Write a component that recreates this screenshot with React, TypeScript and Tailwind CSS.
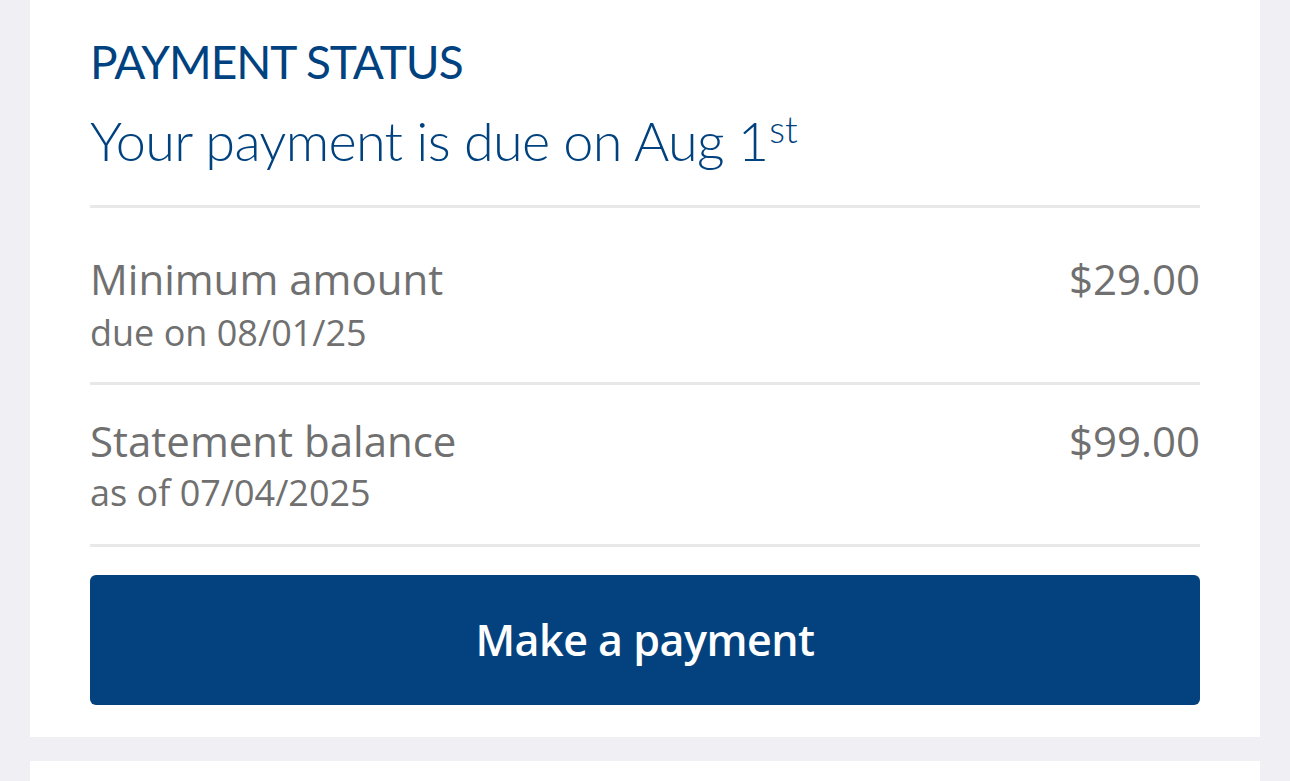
export default function App() {
  return (
    <div className="min-h-screen w-full bg-[#efeff4] px-[30px]" style={{ fontFamily: "'Open Sans', sans-serif" }}>
      <section className="bg-white px-[60px] pt-[39px] pb-[32px]">
        <h2 className="text-[46px] leading-none tracking-[-1px] text-[#00427f] font-['Lato',sans-serif]">PAYMENT STATUS</h2>
        <p className="mt-[29px] text-[54px] leading-none tracking-[-0.7px] font-light text-[#00427f] font-['Lato',sans-serif]">
          Your payment is due on Aug 1<sup className="ml-[1px] text-[37px] leading-[0] tracking-normal">st</sup>
        </p>
        <div className="mt-[37px] border-t-[3px] border-[#e8e8e8]" />

        <div className="flex items-start justify-between pt-[50px] pb-[31px] border-b-[3px] border-[#e8e8e8] text-[#707070]">
          <div>
            <div className="text-[42px] leading-none">Minimum amount</div>
            <div className="mt-[15px] text-[36px] leading-none">due on 08/01/25</div>
          </div>
          <div className="text-[42px] leading-none">$29.00</div>
        </div>

        <div className="flex items-start justify-between pt-[35px] pb-[33px] border-b-[3px] border-[#e8e8e8] text-[#707070]">
          <div>
            <div className="text-[42px] leading-none">Statement balance</div>
            <div className="mt-[13px] text-[36px] leading-none">as of 07/04/2025</div>
          </div>
          <div className="text-[42px] leading-none">$99.00</div>
        </div>

        <button className="mt-[28px] flex h-[130px] w-full items-center justify-center rounded-[6px] bg-[#03427e] text-[43px] font-semibold tracking-[-0.5px] text-white">
          Make a payment
        </button>
      </section>
      <section className="mt-[24px] h-[40px] bg-white" />
    </div>
  );
}
